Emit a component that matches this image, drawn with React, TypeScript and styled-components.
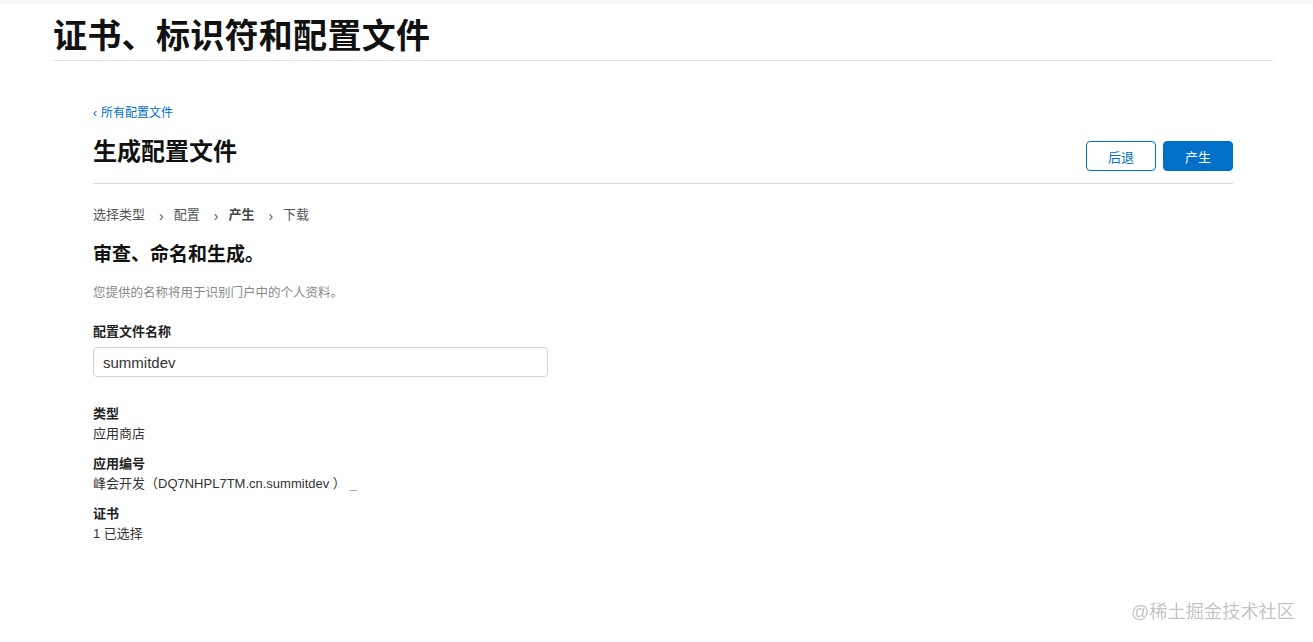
import React from "react";
import styled, { createGlobalStyle } from "styled-components";

const Global = createGlobalStyle`
  html, body { margin: 0; padding: 0; background: #fff; }
  body { font-family: "Liberation Sans", Arial, "Noto Sans CJK SC", sans-serif; color: #111; }
`;

const TopBand = styled.div`
  height: 4px;
  background: #f8f8f8;
`;

const Page = styled.div`
  width: 1220px;
  margin: 0 0 0 53px;
`;

const PageHeader = styled.div`
  height: 56px;
  border-bottom: 1px solid #e2e2e2;
  display: flex;
  align-items: flex-end;
`;

const PageTitle = styled.h1`
  margin: 0 0 2px 0;
  font-size: 34px;
  line-height: 44px;
  font-weight: 700;
  color: #111;
  letter-spacing: 0.3px;
`;

const Content = styled.div`
  padding: 42px 40px 0 40px;
`;

const BackLink = styled.a`
  display: inline-flex;
  align-items: center;
  gap: 4px;
  font-size: 12px;
  line-height: 16px;
  color: #0070c9;
  text-decoration: none;
`;

const TitleRow = styled.div`
  display: flex;
  justify-content: space-between;
  align-items: flex-end;
  padding: 13px 0 12px 0;
  border-bottom: 1px solid #d9d9d9;
`;

const SubTitle = styled.h2`
  margin: 0 0 1px 0;
  font-size: 24px;
  line-height: 36px;
  font-weight: 700;
  color: #111;
`;

const Buttons = styled.div`
  display: flex;
  gap: 7px;
`;

const Button = styled.button<{ $primary?: boolean }>`
  width: 70px;
  height: 30px;
  border-radius: 4px;
  font-family: inherit;
  font-size: 13px;
  cursor: pointer;
  border: 1px solid #0070c9;
  background: ${(p) => (p.$primary ? "#0070c9" : "#fff")};
  color: ${(p) => (p.$primary ? "#fff" : "#0070c9")};
`;

const Steps = styled.div`
  display: flex;
  align-items: center;
  margin-top: 21px;
  font-size: 13px;
  line-height: 18px;
  color: #555;
`;

const Step = styled.span<{ $active?: boolean }>`
  font-weight: ${(p) => (p.$active ? 700 : 400)};
  color: ${(p) => (p.$active ? "#444" : "#555")};
`;

const Sep = styled.span`
  display: inline-block;
  margin: 2px 10px 0 14px;
  font-size: 14px;
  color: #555;
`;

const SectionTitle = styled.h3`
  margin: 17px 0 0 0;
  font-size: 19px;
  line-height: 26px;
  font-weight: 700;
  color: #111;
`;

const Desc = styled.p`
  margin: 16px 0 0 0;
  font-size: 12.5px;
  line-height: 18px;
  color: #888;
`;

const FieldLabel = styled.label`
  display: block;
  margin-top: 21px;
  font-size: 13px;
  line-height: 18px;
  font-weight: 700;
  color: #222;
`;

const Input = styled.input`
  box-sizing: border-box;
  display: block;
  margin-top: 6px;
  width: 455px;
  height: 30px;
  padding: 0 9px;
  border: 1px solid #d2d2d2;
  border-radius: 4px;
  font-family: inherit;
  font-size: 15px;
  color: #333;
  outline: none;
`;

const InfoList = styled.dl`
  margin: 27px 0 0 0;
  display: flex;
  flex-direction: column;
  gap: 10px;
`;

const InfoItem = styled.div`
  display: flex;
  flex-direction: column;
`;

const InfoTerm = styled.dt`
  font-size: 13px;
  line-height: 20px;
  font-weight: 700;
  color: #222;
`;

const InfoValue = styled.dd`
  margin: 0;
  font-size: 13px;
  line-height: 20px;
  color: #333;
`;

const Cursor = styled.span`
  margin-left: 4px;
  color: #999;
`;

const Watermark = styled.div`
  position: fixed;
  right: 18px;
  bottom: 19px;
  font-size: 18px;
  color: #c4c4c4;
  letter-spacing: 0.2px;
`;

export default function App() {
  return (
    <>
      <Global />
      <TopBand />
      <Page>
        <PageHeader>
          <PageTitle>证书、标识符和配置文件</PageTitle>
        </PageHeader>
        <Content>
          <BackLink href="#">
            <span>‹</span>
            <span>所有配置文件</span>
          </BackLink>
          <TitleRow>
            <SubTitle>生成配置文件</SubTitle>
            <Buttons>
              <Button>后退</Button>
              <Button $primary>产生</Button>
            </Buttons>
          </TitleRow>
          <Steps>
            <Step>选择类型</Step>
            <Sep>›</Sep>
            <Step>配置</Step>
            <Sep>›</Sep>
            <Step $active>产生</Step>
            <Sep>›</Sep>
            <Step>下载</Step>
          </Steps>
          <SectionTitle>审查、命名和生成。</SectionTitle>
          <Desc>您提供的名称将用于识别门户中的个人资料。</Desc>
          <FieldLabel>配置文件名称</FieldLabel>
          <Input defaultValue="summitdev" />
          <InfoList>
            <InfoItem>
              <InfoTerm>类型</InfoTerm>
              <InfoValue>应用商店</InfoValue>
            </InfoItem>
            <InfoItem>
              <InfoTerm>应用编号</InfoTerm>
              <InfoValue>
                峰会开发（DQ7NHPL7TM.cn.summitdev ）<Cursor>_</Cursor>
              </InfoValue>
            </InfoItem>
            <InfoItem>
              <InfoTerm>证书</InfoTerm>
              <InfoValue>1 已选择</InfoValue>
            </InfoItem>
          </InfoList>
        </Content>
      </Page>
      <Watermark>@稀土掘金技术社区</Watermark>
    </>
  );
}
